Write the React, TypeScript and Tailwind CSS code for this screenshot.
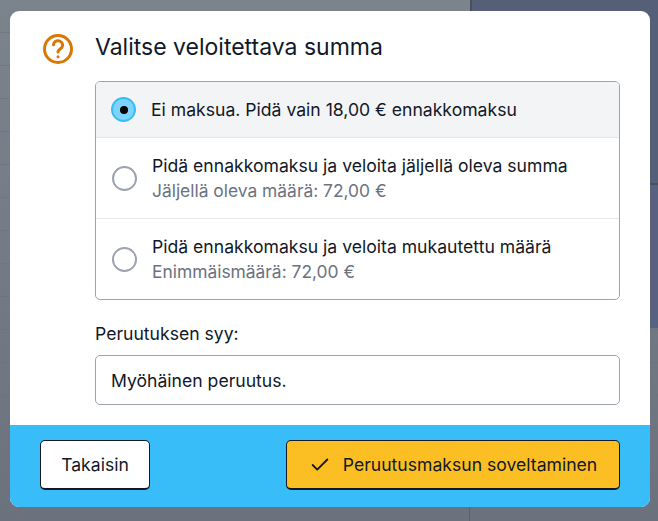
import { Check } from "lucide-react";

const options = [
  { title: "Ei maksua. Pidä vain 18,00 € ennakkomaksu", selected: true },
  {
    title: "Pidä ennakkomaksu ja veloita jäljellä oleva summa",
    hint: "Jäljellä oleva määrä: 72,00 €",
  },
  {
    title: "Pidä ennakkomaksu ja veloita mukautettu määrä",
    hint: "Enimmäismäärä: 72,00 €",
  },
];

function QuestionIcon() {
  return (
    <svg viewBox="0 0 24 24" fill="none" stroke="#d97706" strokeWidth="2" strokeLinecap="round" strokeLinejoin="round" className="mt-[1.5px] h-[36px] w-[36px] shrink-0">
      <circle cx="12" cy="12" r="9" />
      <path d="M9 9.2a3 3 0 0 1 6 .6c0 2-3 2.4-3 4.2" />
      <path d="M12 17.2h.01" />
    </svg>
  );
}

export default function App() {
  return (
    <div className="relative h-[521px] w-[658px] overflow-hidden bg-gradient-to-b from-[#7b838d] to-[#6b727d] pl-[10px] pt-[11px] font-['Inter',sans-serif] text-[#111827]">
      {/* page behind the overlay */}
      <div className="absolute inset-0 bg-[repeating-linear-gradient(to_bottom,transparent_0,transparent_32px,#6b727c_32px,#6b727c_33px)] opacity-60" />
      <div className="absolute right-0 top-0 h-[185px] w-[188px] border-b-2 border-l-2 border-[#4a4f5c] bg-[#555f78]" />
      <div className="absolute right-0 top-[185px] h-[143px] w-[188px] bg-[#56627f]" />
      <div className="absolute bottom-0 left-[469px] h-[193px] w-px bg-[#5b626d]" />

      <div className="relative z-10 flex h-[496px] w-[640px] flex-col overflow-hidden rounded-[9px] bg-white">
        <div className="flex flex-1 flex-col pl-[29.5px] pr-[30px] pt-[18px]">
          <div className="flex items-start gap-[19.5px]">
            <QuestionIcon />
            <h2 className="text-[23px] leading-[36px]">Valitse veloitettava summa</h2>
          </div>
          <div className="ml-[55.5px] mt-[14.5px] overflow-hidden rounded-[5px] border border-[#9ca3af]">
            {options.map((option, index) => (
              <div
                key={option.title}
                className={`flex items-center ${index > 0 ? "border-t border-[#e5e7eb]" : ""} ${option.selected ? "h-[55px] gap-[15px] bg-[#f3f4f6] pl-[15px]" : "h-[81px] gap-[15px] pl-[16px]"}`}
              >
                {option.selected ? (
                  <span className="flex h-[25px] w-[25px] shrink-0 items-center justify-center rounded-full border-2 border-[#38bdf8] bg-[#7dd3fc]">
                    <span className="h-[8px] w-[8px] rounded-full bg-black" />
                  </span>
                ) : (
                  <span className="h-[25px] w-[25px] shrink-0 rounded-full border-2 border-[#9ca3af] bg-white" />
                )}
                <div className="text-[17.6px] leading-[25px]">
                  <div>{option.title}</div>
                  {option.hint && <div className="text-[17.4px] text-[#6b7280]">{option.hint}</div>}
                </div>
              </div>
            ))}
          </div>
          <label className="ml-[55.5px] mt-[22px] block text-[17.6px] leading-6">Peruutuksen syy:</label>
          <div className="ml-[55.5px] mt-[9px] flex h-[50px] items-center rounded-[5px] border border-[#9ca3af] px-[15px] pt-[2px] text-[17.6px]">
            Myöhäinen peruutus.
          </div>
        </div>
        <div className="flex h-[82px] items-start justify-between bg-[#38bdf8] px-[30px] pt-[15px]">
          <button className="h-[50px] w-[110px] rounded-[5px] border border-b-2 border-[#111827] bg-white pt-[1px] text-[17.6px]">
            Takaisin
          </button>
          <button className="flex h-[50px] w-[334px] items-center justify-center gap-[12px] rounded-[5px] border border-b-2 border-[#111827] bg-[#fbbf24] pt-[1px] text-[17.6px]">
            <Check size={22} strokeWidth={2} />
            Peruutusmaksun soveltaminen
          </button>
        </div>
      </div>
    </div>
  );
}
